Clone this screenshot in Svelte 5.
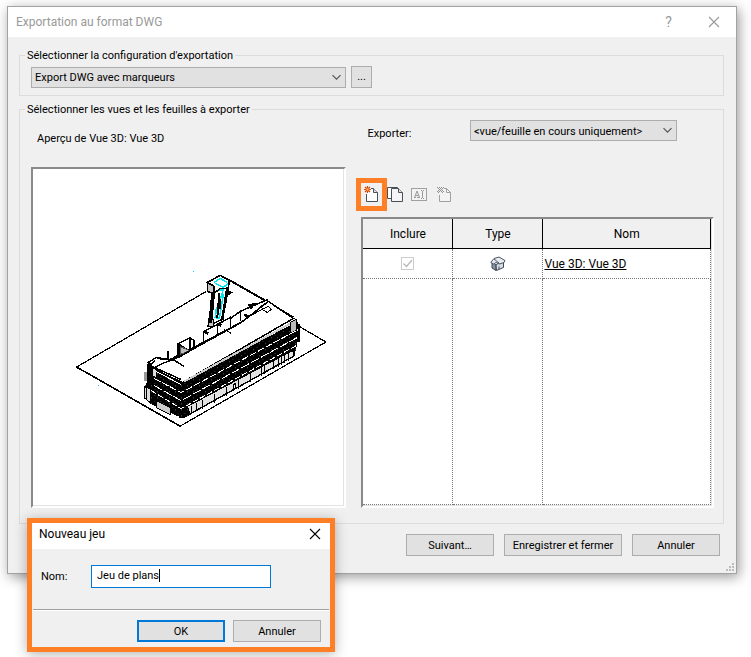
<script>
  let config = $state('Export DWG avec marqueurs');
  let scope = $state('<vue/feuille en cours uniquement>');
  let setName = $state('Jeu de plans');
</script>

{#snippet chevron()}
  <svg class="chevron" width="11" height="7" viewBox="0 0 11 7" aria-hidden="true">
    <path d="M1.5 1.2 5.5 5.2 9.5 1.2" fill="none" stroke="#555" stroke-width="1.2" />
  </svg>
{/snippet}

{#snippet cross()}
  <svg width="12" height="12" viewBox="0 0 12 12" aria-hidden="true">
    <path d="M1 1 11 11M11 1 1 11" fill="none" stroke="currentColor" stroke-width="1.1" />
  </svg>
{/snippet}

<div class="desktop">
  <main class="window">
    <header class="titlebar">
      <h1>Exportation au format DWG</h1>
      <button class="caption" aria-label="Aide">?</button>
      <button class="caption" aria-label="Fermer">{@render cross()}</button>
    </header>

    <div class="body">
      <fieldset class="config">
        <legend>Sélectionner la configuration d'exportation</legend>
        <div class="row">
          <div class="combo wide">
            <select bind:value={config} aria-label="Configuration d'exportation">
              <option>Export DWG avec marqueurs</option>
            </select>
            {@render chevron()}
          </div>
          <button class="push more">...</button>
        </div>
      </fieldset>

      <fieldset class="views">
        <legend>Sélectionner les vues et les feuilles à exporter</legend>
        <div class="columns">
          <section class="left">
            <p>Aperçu de Vue 3D: Vue 3D</p>
            <div class="preview">
              <svg viewBox="33 169 311 336" role="img" aria-label="Vue 3D" shape-rendering="crispEdges">
                <defs>
                  <pattern id="mesh" width="6" height="6" patternUnits="userSpaceOnUse">
                    <rect width="6" height="6" fill="#000" />
                    <rect x="1" y="1" width="1" height="1" fill="#777" />
                    <rect x="4" y="4" width="1" height="1" fill="#555" />
                  </pattern>
                </defs>
                <g fill="none" stroke="#000">
                  <path d="M206 291 76.500 366.500 180 425.500 325.500 341.500 299 326" stroke-width="1.200" />
                  <path d="M76.500 366.500 180 425.500" stroke-width="1.600" />
                </g>
                <!-- lift tower -->
                <path d="M213 290 228 287 226 300 222 319 208 325Z" fill="#fff" stroke="#000" stroke-width="1.500" />
                <path d="M207 282 214 286 213 293 207 291ZM208 321 213 319 213 326 208 326Z" fill="#c4c4c4" stroke="#000" stroke-width="1.300" />
                <path d="M207 282 220 275 229 280 228 288 221 288 214 292 214 286Z" fill="#fff" stroke="#000" stroke-width="1.700" />
                <path d="M211 292 215 291 212 322 208 323Z" fill="#000" />
                <path d="M227 287 222 319" fill="none" stroke="#000" stroke-width="2.500" />
                <path d="M227 289 233 292 228 295Z" />
                <path d="M214 282 220 278 227 282M215 283 223 287 228 283M219 290 223 289 219 303 216 309 215 317 219 318 221 307 223 294" fill="none" stroke="#00e4ee" stroke-width="1.500" />
                <path d="M219 293 217 318M220 299 220 309" stroke="#000" stroke-width="2" />
                <path d="M228 279 263 299 293 317" fill="none" stroke="#000" stroke-width="2" />
                <!-- low rear wing -->
                <path d="M178 343 193 335 204 330 216 325 228 318 240 311 253 304 268 299 271 303 241 323 190 349 178 357Z" fill="#fff" />
                <g fill="none" stroke="#000" stroke-width="1.500">
                  <path d="M178 357V343L190 337V350M190 338 194 340V347M203 331V343M203 331 217 324V336M217 324 230 317V327M230 318 240 311V321M240 311 253 305M245 314 250 317 262 305M251 306 268 299M178 343 188 350" />
                  <path d="M179 344V355M203 331 208 333M217 324 221 325M248 305 253 304 250 308M244 314 249 318" stroke-width="2.500" />
                  <path d="M174 357 190 349 241 322 270 301" stroke-width="2" />
                  <path d="M168 350V358" stroke-width="2" />
                </g>
                <path d="M180 346 189 350 180 354Z" fill="#bbb" stroke="#555" />
                <!-- main volume -->
                <path d="M148 364 156 357 162 359 181 382 297 321 299 326 297 342 294 356 183 418 150 403 144 396 145 385 147 381Z" fill="url(#mesh)" />
                <path d="M144 371H147V380H144Z" fill="#999" />
                <path d="M148 362 156 357 170 359 178 357 192 349 241 322 268 301 293 318 182 382 153 368Z" fill="#fff" stroke="#000" stroke-width="1.500" />
                <g fill="none" stroke="#000">
                  <path d="M148 363V387M151 362V383M155 360 149 365M157 358 169 359 178 356M153 368 162 363 173 359M173 359 184 366M152 366 181 379" stroke-width="1.500" />
                  <path d="M251 315 263 308M224 329 231 333M262 309 268 306 271 309 267 312Z" />
                  <path d="M180 381V417M299 324V341" stroke-width="2" />
                </g>
                <path d="M184 381 292 322" stroke="#ccc" stroke-width="2" />
                <path d="M290 322 296 319V330L290 333Z" fill="#bbb" stroke="#000" />
                <g fill="none" stroke="#fff">
                  <path d="M154 370 181 384" />
                  <path d="M154 378 181 392 298 329" stroke-dasharray="7 2" />
                  <path d="M154 385 181 400 297 337" stroke-dasharray="9 2" />
                  <path d="M151 390 181 408 296 345" stroke-dasharray="6 2" />
                </g>
                <!-- ground floor panels -->
                <path d="M187 406 292 350 294 355 190 413Z" fill="#e2e2e2" stroke="#000" />
                <path d="M191 405V413M196 402V410M202 399V408M214 393V402M226 386V395M238 379V388M250 371V381M261 365V375M264 364V373M273 359V368M278 357V366M281 355V364M284 354V362M288 352V360" stroke="#000" />
                <path d="M233 384 235 383V388H233Z" fill="#fff" stroke="#000" />
                <path d="M144 386 150 388V402L144 397ZM146 386V398" fill="#ddd" stroke="#000" />
                <path d="M156 400 170 407V414L156 407Z" fill="#ccc" stroke="#000" />
                <path d="M153 368 156 370V377L153 375Z" fill="#ddd" />
                <path d="M193 271h1M98 384.500h1" stroke="#0cf" />
              </svg>
            </div>
          </section>

          <section class="right">
            <div class="row export">
              <label for="scope">Exporter:</label>
              <div class="combo">
                <select id="scope" bind:value={scope}>
                  <option>{'<vue/feuille en cours uniquement>'}</option>
                </select>
                {@render chevron()}
              </div>
            </div>

            <div class="toolbar">
              <button class="tool marked" aria-label="Nouveau jeu">
                <svg viewBox="0 0 18 18" aria-hidden="true">
                  <path d="M2.500 8V15.500H13.500V6.500L9.500 2.500H7" fill="#fff" stroke="#4a5058" />
                  <path d="M9.500 2.500V6.500H13.500" fill="#dde" stroke="#4a5058" />
                  <path d="M3.500 0V7M0 3.500H7M1 1 6 6M6 1 1 6" stroke="#d8480c" stroke-width="1.200" />
                  <rect x="2.500" y="2.500" width="2" height="2" fill="#fc4" />
                </svg>
              </button>
              <button class="tool" aria-label="Dupliquer">
                <svg viewBox="0 0 18 18" aria-hidden="true">
                  <path d="M4 12.500H.500V1.500H10.500V3" fill="#fff" stroke="#4a5058" />
                  <path d="M4.500 2.500H11.500L15.500 6.500V15.500H4.500Z" fill="#f5f5f8" stroke="#4a5058" />
                  <path d="M11.500 2.500V6.500H15.500" fill="#dde" stroke="#4a5058" />
                </svg>
              </button>
              <button class="tool" aria-label="Renommer" disabled>
                <svg viewBox="0 0 18 18" aria-hidden="true">
                  <rect x=".5" y="2.500" width="15" height="12" fill="#f3f3f3" stroke="#a0a0a0" />
                  <path d="M3 11.500H5M6 11.500H9M3.500 11.500 6 5 8.500 11.500M4.500 9.500H7.500M10 4.500H11M12 4.500H13M11.500 5V12M10 12.500H11M12 12.500H13" fill="none" stroke="#999" />
                </svg>
              </button>
              <button class="tool" aria-label="Supprimer" disabled>
                <svg viewBox="0 0 18 18" aria-hidden="true">
                  <path d="M4.500 9V15.500H15.500V6.500L11.500 2.500H9" fill="#f3f3f3" stroke="#a0a0a0" />
                  <path d="M11.500 2.500V6.500H15.500" fill="none" stroke="#a0a0a0" />
                  <path d="M2 1h1v1h-1zM4 1h1v1h-1zM6 1h1v1h-1zM8 1h1v1h-1zM3 2h1v1h-1zM5 2h1v1h-1zM7 2h1v1h-1zM4 3h1v1h-1zM6 3h1v1h-1zM3 4h1v1h-1zM5 4h1v1h-1zM7 4h1v1h-1zM2 5h1v1h-1zM4 5h1v1h-1zM6 5h1v1h-1zM8 5h1v1h-1zM3 6h1v1h-1zM7 6h1v1h-1z" fill="#909090" />
                </svg>
              </button>
            </div>

            <div class="sheet">
              <table>
                <thead>
                  <tr><th class="narrow">Inclure</th><th class="narrow">Type</th><th>Nom</th></tr>
                </thead>
                <tbody>
                  <tr>
                    <td>
                      <label class="check">
                        <input type="checkbox" checked disabled aria-label="Inclure Vue 3D" />
                        <svg viewBox="0 0 13 13" aria-hidden="true"><path d="M2.500 6.500 5.500 9.500 11 3" fill="none" stroke="#b8b8b8" stroke-width="1.200" /></svg>
                      </label>
                    </td>
                    <td>
                      <svg class="house" viewBox="0 0 16 16" role="img" aria-label="Vue 3D">
                        <path d="M2 6 6 9V14.500L2 12Z" fill="#8b96a5" stroke="#3e4856" />
                        <path d="M6 9 10 6 13.500 5.500V11.500L6.500 14.500Z" fill="#d5dbe3" stroke="#3e4856" />
                        <path d="M.800 6.500 4 2.500 9 1 15 4.500 14 6.500 9.500 8 6 6.500 3.500 8Z" fill="#e8ebef" stroke="#4b5563" />
                        <path d="M4 3 9.500 7.500M9 10.500V13.500" fill="none" stroke="#4b5563" />
                      </svg>
                    </td>
                    <td class="name"><a href="#vue3d">Vue 3D: Vue 3D</a></td>
                  </tr>
                  <tr class="rest"><td></td><td></td><td></td></tr>
                </tbody>
              </table>
            </div>
          </section>
        </div>
      </fieldset>

      <footer class="actions">
        <button class="push">Suivant…</button>
        <button class="push save">Enregistrer et fermer</button>
        <button class="push">Annuler</button>
      </footer>
    </div>
    <svg class="grip" viewBox="0 0 8 8" aria-hidden="true">
      <path d="M6 0h2v2H6zM3 3h2v2H3zM6 3h2v2H6zM0 6h2v2H0zM3 6h2v2H3zM6 6h2v2H6z" fill="#bdbdbd" />
    </svg>
  </main>

  <div class="dialog" role="dialog" aria-labelledby="new-set">
    <header>
      <h2 id="new-set">Nouveau jeu</h2>
      <button class="close" aria-label="Fermer">{@render cross()}</button>
    </header>
    <div class="field">
      <label for="set-name">Nom:</label>
      <div class="entry">
        <input id="set-name" type="text" bind:value={setName} />
        <span class="caret"></span>
      </div>
    </div>
    <div class="choices">
      <button class="push default">OK</button>
      <button class="push">Annuler</button>
    </div>
  </div>
</div>

<style>
  :global(body) {
    background: #fff;
  }
  .desktop {
    position: relative;
    padding: 6px 14px 83px 7px;
    font: 11px/14px Roboto, 'Noto Sans', sans-serif;
    color: #000;
  }
  .desktop * {
    box-sizing: border-box;
  }
  button,
  input,
  select {
    font: inherit;
    color: inherit;
    margin: 0;
    padding: 0;
    border-radius: 0;
  }
  h1,
  h2,
  p {
    margin: 0;
    font-weight: normal;
  }
  .window {
    position: relative;
    background: #f0f0f0;
    border: 1px solid #a2a2a2;
    box-shadow: 2px 3px 12px rgba(0, 0, 0, 0.4);
  }
  .titlebar {
    display: flex;
    align-items: center;
    height: 30px;
    padding-left: 8px;
    background: #fff;
    color: #999;
  }
  h1 {
    flex: 1;
    font-size: 12px;
  }
  .caption {
    display: grid;
    place-items: center;
    width: 45px;
    height: 30px;
    border: 0;
    background: none;
    font-size: 14px;
  }
  .body {
    padding: 11px 12px 17px 11px;
  }
  fieldset {
    min-width: 0;
    margin: 0;
    border: 1px solid #dcdcdc;
    padding: 0 9px 0 11px;
  }
  legend {
    height: 14px;
    margin-left: -6px;
    padding: 0 2px;
    line-height: 16px;
  }
  .row {
    display: flex;
    gap: 5px;
  }
  .config .row {
    padding: 4px 0 7px;
  }
  .combo {
    display: grid;
    align-items: center;
    width: 207px;
  }
  .combo.wide {
    width: 315px;
  }
  .combo select,
  .combo .chevron {
    grid-area: 1 / 1;
  }
  .combo select {
    appearance: none;
    height: 21px;
    padding: 2px 20px 0 3px;
    border: 1px solid #adadad;
    background: #e1e1e1;
  }
  .chevron {
    justify-self: end;
    margin-right: 4px;
    pointer-events: none;
  }
  .push {
    width: 88px;
    height: 22px;
    border: 1px solid #adadad;
    background: #e1e1e1;
    white-space: nowrap;
  }
  .push.more {
    width: 21px;
  }
  .push.save {
    width: 118px;
  }
  .push.default {
    border: 2px solid #0078d7;
  }
  .views {
    margin-top: 6px;
    padding-bottom: 15px;
  }
  .columns {
    display: grid;
    grid-template-columns: minmax(0, 315fr) minmax(0, 352fr);
    gap: 15px;
  }
  .left {
    display: flex;
    flex-direction: column;
  }
  .left p {
    padding: 16px 0 21px 6px;
  }
  .preview,
  .sheet {
    border: 2px solid;
    border-color: #8a8a8a #fff #fff #8a8a8a;
    background: #fff;
    box-shadow: inset -1px -1px #e3e3e3;
  }
  .preview {
    flex: 1;
    display: flex;
  }
  .preview svg {
    width: 100%;
  }
  .export {
    align-items: center;
    justify-content: space-between;
    padding: 4px 37px 0 6px;
  }
  .export label {
    padding-top: 6px;
  }
  .toolbar {
    display: flex;
    align-items: center;
    margin: 37px 0 6px -5px;
  }
  .tool {
    width: 24px;
    height: 18px;
    border: 0;
    background: none;
    text-align: left;
  }
  .tool svg {
    display: block;
    width: 18px;
    height: 18px;
  }
  .tool.marked {
    width: 31px;
    height: 33px;
    padding-left: 3px;
    border: 5px solid #ff7f27;
  }
  .sheet {
    height: 291px;
    padding: 0 1px 1px 0;
  }
  table {
    width: 100%;
    height: 100%;
    table-layout: fixed;
    border-collapse: separate;
    border-spacing: 0;
    font-size: 12px;
  }
  th,
  td {
    height: 30px;
    padding: 0;
    text-align: center;
    vertical-align: middle;
  }
  th {
    border: solid #000;
    border-width: 0 1px 1px 0;
    background: #f0f0f0;
    font-weight: normal;
  }
  .narrow {
    width: 90px;
  }
  td {
    border: dotted #777;
    border-width: 0 1px 1px 0;
  }
  td.name {
    padding-left: 1px;
    text-align: left;
  }
  .rest td {
    height: auto;
  }
  a {
    color: inherit;
    text-underline-offset: 1px;
  }
  .check {
    display: grid;
    width: 13px;
    margin: 0 auto;
  }
  .check input,
  .check svg {
    grid-area: 1 / 1;
    width: 13px;
    height: 13px;
  }
  .check input {
    appearance: none;
    border: 1px solid #ccc;
    background: #fff;
  }
  .house {
    display: block;
    width: 16px;
    height: 16px;
    margin: 0 auto;
  }
  .actions {
    display: flex;
    justify-content: flex-end;
    gap: 10px;
    padding: 10px 4px 0 0;
  }
  .actions .push {
    padding-top: 2px;
  }
  .grip {
    position: absolute;
    right: 2px;
    bottom: 2px;
    width: 8px;
    height: 8px;
  }
  .dialog {
    position: absolute;
    left: 27px;
    top: 518px;
    width: 308px;
    border: 5px solid #ff7f27;
    background: #f0f0f0;
    box-shadow: 0 2px 12px rgba(0, 0, 0, 0.3);
  }
  .dialog header {
    display: flex;
    align-items: center;
    justify-content: space-between;
    height: 26px;
    padding: 0 9px 4px 7px;
    background: #fff;
  }
  h2 {
    font-size: 12px;
  }
  .close {
    display: grid;
    width: 12px;
    border: 0;
    background: none;
  }
  .field {
    display: flex;
    align-items: center;
    padding: 16px 9px 21px;
  }
  .field label {
    width: 50px;
  }
  .entry {
    position: relative;
    width: 180px;
  }
  .entry input {
    display: block;
    width: 100%;
    height: 23px;
    padding: 0 5px 2px;
    border: 1px solid #0078d7;
    background: #fff;
    outline: 0;
  }
  .caret {
    position: absolute;
    left: 68px;
    top: 4px;
    width: 1px;
    height: 13px;
    background: #000;
  }
  .choices {
    display: flex;
    justify-content: flex-end;
    gap: 8px;
    margin: 0 1px;
    padding: 10px 8px 5px;
    border-top: 1px solid #a0a0a0;
    box-shadow: inset 0 1px #fff;
  }
  .choices .push {
    padding-top: 1px;
  }
</style>
